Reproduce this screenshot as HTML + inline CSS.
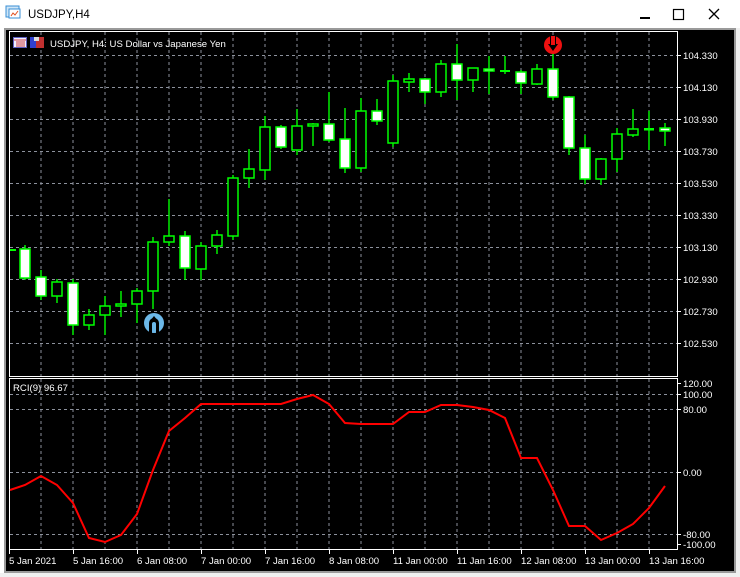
<!DOCTYPE html>
<html><head><meta charset="utf-8"><style>
html,body{margin:0;padding:0;width:740px;height:577px;overflow:hidden;background:#fff;font-family:"Liberation Sans",sans-serif}
svg{display:block}
</style></head><body>
<svg width="740" height="577" xmlns="http://www.w3.org/2000/svg" font-family="Liberation Sans, sans-serif">
<rect x="0" y="0" width="740" height="577" fill="#fff"/>
<g>
<rect x="6" y="6" width="13" height="11" fill="#cfe6f7" stroke="#3a8fd6"/>
<rect x="9" y="9" width="11" height="9" fill="#fff" stroke="#3a8fd6"/>
<polyline points="11,16 13,13 15,15 18,11" fill="none" stroke="#e05020" stroke-width="1"/>
<text x="28" y="18" font-size="11.5" fill="#000">USDJPY,H4</text>
<rect x="640" y="17" width="10" height="2" fill="#000"/>
<rect x="673.5" y="9.5" width="10" height="10" fill="none" stroke="#000" stroke-width="1.2"/>
<path d="M709 9 L719 19 M719 9 L709 19" stroke="#000" stroke-width="1.3"/>
</g>
<rect x="4" y="28" width="732" height="545" fill="#9a9a9a"/>
<rect x="6" y="30" width="728" height="541" fill="#000"/>
<rect x="736" y="28" width="4" height="549" fill="#f0f0f0"/>
<rect x="0" y="573" width="740" height="4" fill="#f0f0f0"/>
<g stroke="#8c919c" stroke-width="1" stroke-dasharray="3,3" fill="none">
<path d="M41 32V376M73 32V376M105 32V376M137 32V376M169 32V376M201 32V376M233 32V376M265 32V376M297 32V376M329 32V376M361 32V376M393 32V376M425 32V376M457 32V376M489 32V376M521 32V376M553 32V376M585 32V376M617 32V376M649 32V376"/>
<path d="M10 55.5H677M10 87.5H677M10 119.5H677M10 151.5H677M10 183.5H677M10 215.5H677M10 247.5H677M10 279.5H677M10 311.5H677M10 343.5H677"/>
<path d="M41 379V549M73 379V549M105 379V549M137 379V549M169 379V549M201 379V549M233 379V549M265 379V549M297 379V549M329 379V549M361 379V549M393 379V549M425 379V549M457 379V549M489 379V549M521 379V549M553 379V549M585 379V549M617 379V549M649 379V549"/>
<path d="M10 394.5H677M10 409.5H677M10 472.5H677M10 534.5H677"/>
</g>
<rect x="9.5" y="31.5" width="668" height="345" fill="none" stroke="#fff"/>
<rect x="9.5" y="378.5" width="668" height="171" fill="none" stroke="#fff"/>
<g stroke="#fff"><path d="M677 55.5h4M677 87.5h4M677 119.5h4M677 151.5h4M677 183.5h4M677 215.5h4M677 247.5h4M677 279.5h4M677 311.5h4M677 343.5h4M677 383.5h4M677 394.5h4M677 409.5h4M677 472.5h4M677 534.5h4M677 544.5h4"/>
<path d="M9.5 549v5M73.5 549v5M137.5 549v5M201.5 549v5M265.5 549v5M329.5 549v5M393.5 549v5M457.5 549v5M521.5 549v5M585.5 549v5M649.5 549v5"/></g>
<g fill="#fff" font-size="9.6">
<text x="683" y="59">104.330</text><text x="683" y="91">104.130</text><text x="683" y="123">103.930</text><text x="683" y="155">103.730</text><text x="683" y="187">103.530</text><text x="683" y="219">103.330</text><text x="683" y="251">103.130</text><text x="683" y="283">102.930</text><text x="683" y="315">102.730</text><text x="683" y="347">102.530</text>
<text x="683" y="387">120.00</text><text x="683" y="398">100.00</text><text x="683" y="413">80.00</text><text x="683" y="476">0.00</text><text x="683" y="538">-80.00</text><text x="683" y="548">-100.00</text>
<text x="9" y="564">5 Jan 2021</text><text x="73" y="564">5 Jan 16:00</text><text x="137" y="564">6 Jan 08:00</text><text x="201" y="564">7 Jan 00:00</text><text x="265" y="564">7 Jan 16:00</text><text x="329" y="564">8 Jan 08:00</text><text x="393" y="564">11 Jan 00:00</text><text x="457" y="564">11 Jan 16:00</text><text x="521" y="564">12 Jan 08:00</text><text x="585" y="564">13 Jan 00:00</text><text x="649" y="564">13 Jan 16:00</text>
<text x="50" y="47">USDJPY, H4:  US Dollar vs Japanese Yen</text>
<text x="13" y="391">RCI(9) 96.67</text>
</g>
<rect x="13.5" y="37.5" width="13" height="10" fill="#f0f0ff" stroke="#6060c0"/>
<path d="M14 40h12M16 42h9M16 44h9M16 46h9" stroke="#d04040"/>
<rect x="30" y="37" width="6" height="11" fill="#3040d0"/><rect x="36" y="37" width="8" height="11" fill="#c03030"/><rect x="34" y="37" width="5" height="4" fill="#ddd"/>
<g stroke="#00ff00" stroke-width="1.4">
<path d="M25 245V280M41 270V300M57 279V303M73 279V335M89 309V330M105 296V335M121 291V317M137 288V323M153 237V309M169 199V246M185 231V280M201 242V280M217 230V254M233 175V240M249 149V188M265 116V180M281 125V149M297 109V155M313 123V146M329 92V142M345 108V173M361 98V172M377 99V125M393 75V147M409 73V92M425 78V104M441 60V97M457 44V100M473 68V92M489 56V94M505 56V74M521 70V94M537 64V85M553 50V100M569 96V155M585 135V184M601 158V185M617 128V172M633 109V137M649 111V150M665 123V146"/>
</g>
<g stroke="#00ff00" stroke-width="1.5">
<g fill="#fff">
<rect x="20" y="249" width="10" height="29"/><rect x="36" y="277" width="10" height="19"/><rect x="68" y="283" width="10" height="42"/><rect x="180" y="236" width="10" height="32"/><rect x="276" y="127" width="10" height="20"/><rect x="324" y="124" width="10" height="16"/><rect x="340" y="139" width="10" height="29"/><rect x="372" y="111" width="10" height="10"/><rect x="420" y="79" width="10" height="13"/><rect x="452" y="64" width="10" height="16"/><rect x="484" y="69" width="10" height="2"/><rect x="516" y="72" width="10" height="11"/><rect x="548" y="69" width="10" height="28"/><rect x="564" y="97" width="10" height="51"/><rect x="580" y="148" width="10" height="31"/><rect x="660" y="128" width="10" height="3"/>
</g>
<g fill="#000">
<rect x="52" y="282" width="10" height="14"/><rect x="84" y="315" width="10" height="10"/><rect x="100" y="306" width="10" height="9"/><rect x="116" y="304" width="10" height="2"/><rect x="132" y="291" width="10" height="13"/><rect x="148" y="242" width="10" height="49"/><rect x="164" y="236" width="10" height="6"/><rect x="196" y="246" width="10" height="23"/><rect x="212" y="235" width="10" height="11"/><rect x="228" y="178" width="10" height="58"/><rect x="244" y="169" width="10" height="9"/><rect x="260" y="127" width="10" height="43"/><rect x="292" y="126" width="10" height="24"/><rect x="308" y="124" width="10" height="2"/><rect x="356" y="111" width="10" height="57"/><rect x="388" y="81" width="10" height="62"/><rect x="404" y="79" width="10" height="3"/><rect x="436" y="64" width="10" height="28"/><rect x="468" y="68" width="10" height="12"/><rect x="532" y="69" width="10" height="15"/><rect x="596" y="159" width="10" height="20"/><rect x="612" y="134" width="10" height="25"/><rect x="628" y="129" width="10" height="6"/>
</g>
</g>
<g fill="#00ff00"><rect x="10" y="249" width="6" height="2"/><rect x="500" y="70" width="10" height="2"/><rect x="644" y="128" width="10" height="2.5"/></g>
<circle cx="154" cy="323" r="10" fill="#6cb8e8"/>
<path d="M149 333V323a5 5 0 0 1 10 0V333h-3V324a1 1 0 0 0-4 0V333z" fill="#000"/>
<path d="M154 316l-4 5h8z" fill="#000"/>
<circle cx="553" cy="45" r="9" fill="#ee1010"/>
<path d="M550 36V44h-2l5 7 5-7h-2V36z" fill="#000"/>
<path d="M551 36h4v9h-4z" fill="#ee1010"/>
<polyline fill="none" stroke="#ff0000" stroke-width="2" points="10,490 25,485 41,476 57,485 73,503 89,538 105,542 121,535 137,514 153,470 169,431 185,418 201,404 217,404 233,404 249,404 265,404 281,404 297,399 313,395 329,404 345,423 361,424 377,424 393,424 409,412 425,412 441,405 457,405 473,407 489,410 505,418 521,458 537,458 553,490 569,526 585,526 601,540 617,533 633,524 649,508 665,486"/>
</svg>
</body></html>
